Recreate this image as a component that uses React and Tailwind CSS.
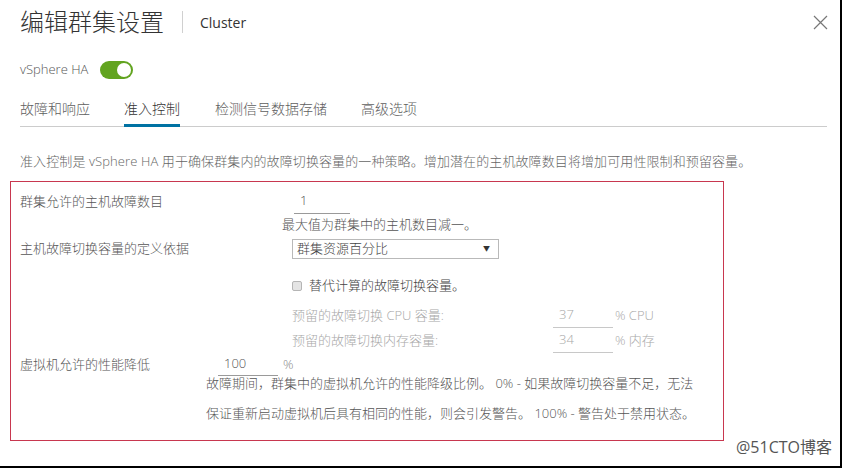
import React from 'react';

const tabs = ['故障和响应', '准入控制', '检测信号数据存储', '高级选项'];

// thin underlined number field used across the admission form
const NumberField = ({ value, width = 'w-[56px]', disabled = false }) => (
    <div
        className={`${width} h-full flex items-center px-[6px] border-b ${
            disabled ? 'border-[#c8c8c8] text-[#a8a8a8]' : 'border-[#9a9a9a] text-[#555]'
        }`}
    >
        {value}
    </div>
);

const App = () => {
    return (
        <div className="relative w-[842px] h-[468px] bg-white border-r-2 border-b-2 border-black font-['Open_Sans','Noto_Sans_CJK_SC',sans-serif] font-light text-[13px] text-[#565656]">
            {/* Header */}
            <div className="h-[44px] flex items-center pl-5 pr-[12px]">
                <h1 className="text-[24px] font-light text-[#333] leading-none">编辑群集设置</h1>
                <div className="w-px h-[22px] bg-[#d0d0d0] ml-[18px]" />
                <span className="ml-[17px] text-[14px] font-normal text-[#333]">Cluster</span>
                <button className="ml-auto w-[16px] h-[16px] flex items-center justify-center text-[#777]">
                    <svg width="15" height="15" viewBox="0 0 15 15" fill="none" stroke="currentColor" strokeWidth="1.2">
                        <path d="M1 1L14 14M14 1L1 14" />
                    </svg>
                </button>
            </div>

            {/* HA switch */}
            <div className="mt-[14px] h-[24px] flex items-center pl-5">
                <span className="text-[13px] text-[#565656]">vSphere HA</span>
                <div className="ml-[12px] w-[33px] h-[18px] rounded-full bg-[#62a420] flex items-center justify-end pr-[2px]">
                    <div className="w-[14px] h-[14px] rounded-full bg-white" />
                </div>
            </div>

            {/* Tabs */}
            <div className="mt-[8px] ml-5 mr-[13px] flex border-b border-[#cccccc]">
                {tabs.map((tab, i) => (
                    <div
                        key={tab}
                        className={`h-[37px] -mb-px flex items-center text-[14px] border-b-[3px] pt-[3px] ${
                            i === 0 ? '' : i === 2 ? 'ml-[35px]' : 'ml-[34px]'
                        } ${i === 1 ? 'border-[#0072a3] text-[#333]' : 'border-transparent text-[#5e5e5e]'}`}
                    >
                        {tab}
                    </div>
                ))}
            </div>

            {/* Description */}
            <p className="mt-[24px] ml-5 leading-[20px] text-[#666] tracking-[0.1px]">
                准入控制是 vSphere HA 用于确保群集内的故障切换容量的一种策略。增加潜在的主机故障数目将增加可用性限制和预留容量。
            </p>

            {/* Admission control form */}
            <div className="mt-[10px] ml-[10px] w-[714px] h-[260px] border border-[#c8374f] pl-[9px] pt-[6px]">
                <div className="flex h-[26px]">
                    <div className="w-[274px] flex items-center pt-[2px]">群集允许的主机故障数目</div>
                    <NumberField value="1" />
                </div>
                <div className="ml-[262px] h-[18px] leading-[18px] mt-[1px]">最大值为群集中的主机数目减一。</div>

                <div className="flex h-[20px] mt-[6px]">
                    <div className="w-[272px] flex items-center">主机故障切换容量的定义依据</div>
                    <div className="w-[207px] border border-[#b9b9b9] flex items-center justify-between pl-[4px] pr-[8px] text-[#444]">
                        <span>群集资源百分比</span>
                        <span className="text-[7px] text-[#333]">▼</span>
                    </div>
                </div>

                <div className="ml-[272px] mt-[17px] h-[20px] flex items-center">
                    <div className="w-[10px] h-[10px] rounded-[2px] border border-[#b5b5b5] bg-[#e4e4e4]" />
                    <span className="ml-[7px] text-[#444]">替代计算的故障切换容量。</span>
                </div>

                <div className="ml-[272px] mt-[7px] flex h-[25px] text-[#a8a8a8]">
                    <div className="w-[261px] flex items-center">预留的故障切换 CPU 容量:</div>
                    <NumberField value="37" width="w-[60px]" disabled />
                    <div className="ml-[2px] flex items-center">% CPU</div>
                </div>
                <div className="ml-[272px] flex h-[25px] text-[#a8a8a8]">
                    <div className="w-[261px] flex items-center">预留的故障切换内存容量:</div>
                    <NumberField value="34" width="w-[60px]" disabled />
                    <div className="ml-[2px] flex items-center">% 内存</div>
                </div>

                <div className="flex h-[23px]">
                    <div className="w-[198px] flex items-center">虚拟机允许的性能降低</div>
                    <NumberField value="100" width="w-[60px]" />
                    <div className="ml-[5px] flex items-center text-[#888]">%</div>
                </div>
                <div className="ml-[186px] -mt-[8px] leading-[30px] text-[#565656]">
                    <div>故障期间，群集中的虚拟机允许的性能降级比例。 0% - 如果故障切换容量不足，无法</div>
                    <div>保证重新启动虚拟机后具有相同的性能，则会引发警告。 100% - 警告处于禁用状态。</div>
                </div>
            </div>

            {/* Watermark */}
            <span className="absolute right-[8px] bottom-[7px] text-[16px] font-normal text-[#555]">@51CTO博客</span>
        </div>
    );
};

export default App;
